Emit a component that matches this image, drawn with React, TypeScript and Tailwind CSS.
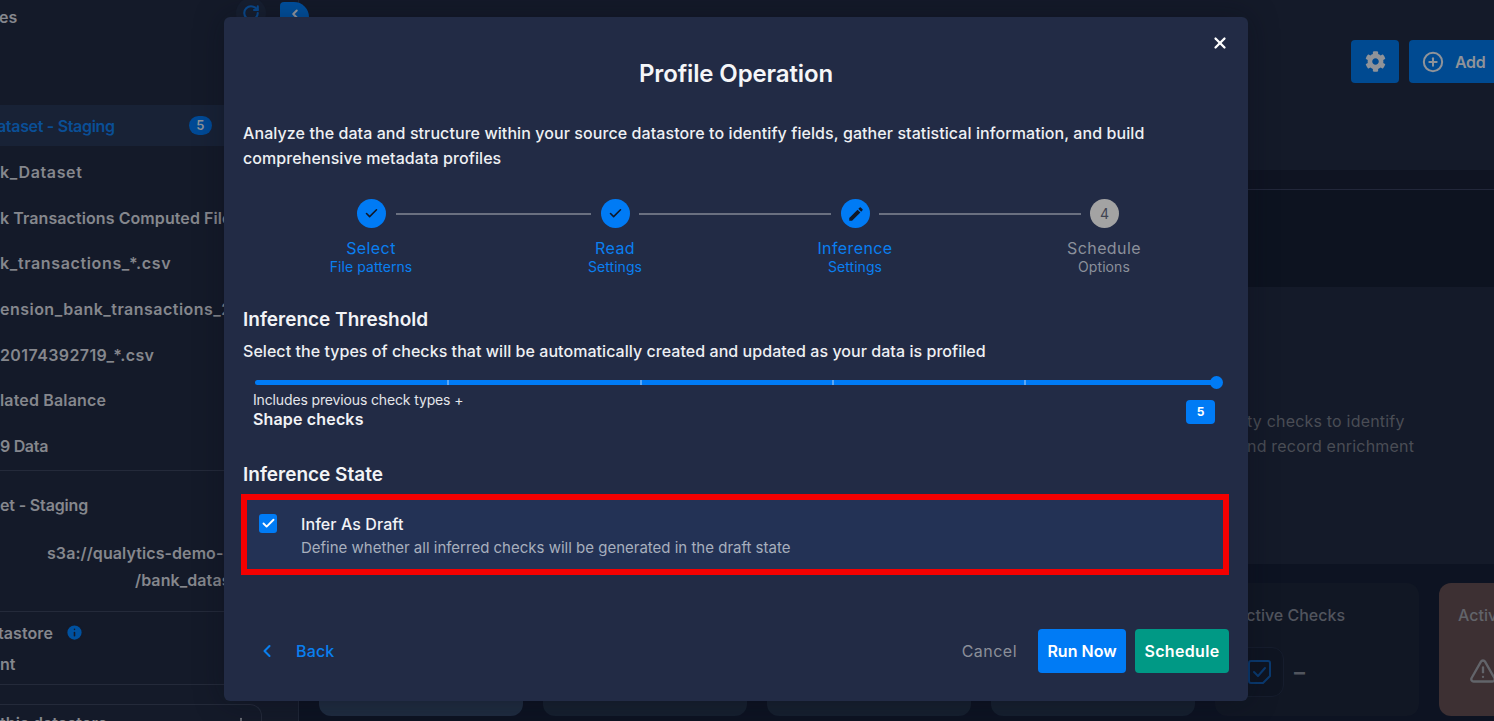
import { Check, ChevronLeft, CirclePlus, Info, Plus, RotateCw, TriangleAlert, X } from "lucide-react";
import { FaCog } from "react-icons/fa";
import { MdEdit } from "react-icons/md";

const fileRows = [
  { label: "k_Dataset", spacing: "tracking-[0.04em]" },
  { label: "k Transactions Computed File", spacing: "tracking-[0.005em]" },
  { label: "k_transactions_*.csv", spacing: "tracking-[0.04em]" },
  { label: "ension_bank_transactions_2024", spacing: "tracking-[0.03em]" },
  { label: "20174392719_*.csv", spacing: "tracking-[0.025em]" },
  { label: "lated Balance", spacing: "tracking-[0.01em]" },
  { label: "9 Data", spacing: "tracking-[-0.02em]" },
];

function Sidebar() {
  return (
    <aside className="w-[299px] shrink-0 h-full flex flex-col border-r border-[#1f2636] text-[16px] font-semibold text-[#85878d] tracking-[0.005em] whitespace-nowrap overflow-hidden">
      <div className="h-[105px] shrink-0 pt-[5px] leading-[24px] ml-[-1px]">es</div>
      <div className="h-[41px] shrink-0 bg-[#182236] flex items-center">
        <span className="ml-[-3px] w-[192px] shrink-0 text-[#0a4f96] tracking-[-0.02em]">ataset - Staging</span>
        <span className="w-[23px] h-[19px] shrink-0 rounded-full bg-[#004a96] text-[#8f9399] text-[13px] flex items-center justify-center">5</span>
      </div>
      <div className="flex flex-col shrink-0 pt-[3px]">
        {fileRows.map((row) => (
          <div key={row.label} className={`h-[45.7px] shrink-0 flex items-center ${row.spacing}`}>{row.label}</div>
        ))}
      </div>
      <div className="border-t border-[#242a3a] shrink-0 mt-[1px] pt-[22px] leading-[24px] tracking-[-0.01em]">et - Staging</div>
      <div className="pl-[47px] pt-[23px] leading-[27px] h-[95px] shrink-0 border-b border-[#242a3a]">
        <div>s3a://qualytics-demo-data</div>
        <div className="pl-[88px]">/bank_dataset</div>
      </div>
      <div className="pt-[9px] leading-[24px] shrink-0 flex items-center gap-[12px] ml-[-2px]">
        <span>tastore</span>
        <Info size={19} className="text-[#141a29] fill-[#00519f]" />
      </div>
      <div className="pt-[7px] leading-[24px] h-[40px] shrink-0 border-b border-[#242a3a]">nt</div>
      <div className="mt-[19px] w-[262px] h-[40px] shrink-0 border-t border-r border-[#242a3a] rounded-tr-xl flex justify-between pr-[12px] pt-[6px] leading-[24px]">
        <span>this datastore</span>
        <Plus size={16} className="mt-[4px]" />
      </div>
    </aside>
  );
}

function MainPanel() {
  const cardStyles = ["bg-[#1f2c40]", "bg-[#16202f]", "bg-[#16202f]", "bg-[#16202f]"];
  return (
    <main className="flex-1 min-w-0 h-full flex flex-col overflow-hidden whitespace-nowrap">
      <div className="h-[170px] shrink-0 pt-[40px] pl-[1052px] flex gap-[10px] items-start">
        <button className="w-[48px] h-[43px] shrink-0 rounded-[4px] bg-[#004a91] text-[#8f9399] flex items-center justify-center">
          <FaCog size={21} />
        </button>
        <button className="w-[120px] h-[43px] shrink-0 rounded-[4px] bg-[#004a91] text-[#8f9399] flex items-center pl-[13px] gap-[11px] text-[16px] font-semibold tracking-[-0.02em]">
          <CirclePlus size={22} strokeWidth={2.2} />
          Add
        </button>
      </div>
      <div className="h-[20px] shrink-0 bg-[#0f1422] border-b border-[#22273a]" />
      <div className="h-[97px] shrink-0 bg-[#0d1320]" />
      <div className="h-[277px] shrink-0 pt-[122px] pl-[948px] text-[16px] leading-[25px] text-[#4a4d55] tracking-[0.0125em]">
        <div>ty checks to identify</div>
        <div>nd record enrichment</div>
      </div>
      <div className="flex-1 bg-[#0d1322] pt-[19px] pl-[20px] flex gap-[20px]">
        {cardStyles.map((tone, i) => (
          <div key={i} className={`w-[204px] h-[133px] shrink-0 rounded-xl ${tone}`} />
        ))}
        <div className="w-[204px] h-[133px] shrink-0 rounded-xl bg-[#111724] pl-[19px] pt-[20px]">
          <div className="text-[16px] leading-[24px] font-medium text-[#51555e] pl-[1px]">Active Checks</div>
          <div className="mt-[20px] flex items-center gap-[10px]">
            <div className="w-[50px] h-[50px] rounded-xl border border-[#161d2d] bg-[#0f1522] flex items-center justify-center text-[#0a3a70]">
              <svg width="26" height="26" viewBox="0 0 26 26" fill="none" stroke="currentColor" strokeWidth="2" strokeLinejoin="round" strokeLinecap="round">
                <path d="M5 2h17a2 2 0 0 1 2 2v13l-7 7H5a2 2 0 0 1-2-2V4a2 2 0 0 1 2-2z" />
                <path d="M8 13l4 4 7-8" />
              </svg>
            </div>
            <span className="text-[22px] font-bold text-[#51555e]">–</span>
          </div>
        </div>
        <div className="w-[204px] h-[133px] shrink-0 rounded-xl bg-[#3d3033] pl-[19px] pt-[20px]">
          <div className="text-[16px] leading-[24px] font-medium text-[#62646a]">Active</div>
          <TriangleAlert size={28} className="mt-[30px] ml-[11px] text-[#62646a]" />
        </div>
      </div>
    </main>
  );
}

function StepBadge({ tone, children }: { tone: string; children: React.ReactNode }) {
  return (
    <div className={`w-[29px] h-[29px] shrink-0 rounded-full flex items-center justify-center ${tone}`}>{children}</div>
  );
}

function StepLabel({ title, sub, done, className }: { title: string; sub: string; done: boolean; className: string }) {
  return (
    <div className={`w-[120px] shrink-0 text-center ${done ? "text-[#0a7ff0]" : "text-[#8b909b]"} ${className}`}>
      <div className="text-[16px] leading-[20px] tracking-[0.025em]">{title}</div>
      <div className="text-[14px] leading-[18px] tracking-[0.005em]">{sub}</div>
    </div>
  );
}

function Stepper() {
  return (
    <div className="mt-[28px]">
      <div className="flex items-center pl-[114px]">
        <StepBadge tone="bg-[#007bf5] text-[#101828]"><Check size={15} strokeWidth={2.5} /></StepBadge>
        <div className="w-[195px] h-[2px] mx-[10px] bg-[#6a7080]" />
        <StepBadge tone="bg-[#007bf5] text-[#101828]"><Check size={15} strokeWidth={2.5} /></StepBadge>
        <div className="w-[192px] h-[2px] ml-[9px] mr-[10px] bg-[#6a7080]" />
        <StepBadge tone="bg-[#007bf5] text-[#101828]"><MdEdit size={18} /></StepBadge>
        <div className="w-[202px] h-[2px] mx-[9px] bg-[#6a7080]" />
        <StepBadge tone="bg-[#a3a3a3] text-[#3f4452] text-[14px]">4</StepBadge>
      </div>
      <div className="flex pl-[68px] pt-[10px]">
        <StepLabel title="Select" sub="File patterns" done className="" />
        <StepLabel title="Read" sub="Settings" done className="ml-[124px]" />
        <StepLabel title="Inference" sub="Settings" done className="ml-[120px]" />
        <StepLabel title="Schedule" sub="Options" done={false} className="ml-[129px]" />
      </div>
    </div>
  );
}

function ThresholdSlider() {
  const segments = [194, 193, 192, 192, 191];
  return (
    <div className="relative mt-[17px] ml-[12px] w-[962px] h-[5px] shrink-0 rounded-full bg-[#007bf5] flex">
      {segments.map((w, i) => (
        <div key={i} style={{ width: w }} className={i < 4 ? "h-full border-r-2 border-[#5aa7f5]" : "h-full"} />
      ))}
      <div className="absolute right-[-6px] top-[-4px] w-[13px] h-[13px] rounded-full bg-[#007bf5]" />
    </div>
  );
}

function ProfileModal() {
  return (
    <div className="absolute left-[224px] top-[17px] w-[1024px] h-[684px] rounded-md bg-[#222b45] shadow-[0_0_30px_rgba(8,12,24,0.35)] px-[19px] text-white flex flex-col">
      <button className="absolute right-[19px] top-[17px] text-white">
        <X size={18} strokeWidth={3} />
      </button>
      <h2 className="mt-[40px] text-center text-[24px] leading-[34px] font-semibold tracking-[-0.005em] text-[#f5f6f8]">Profile Operation</h2>
      <p className="mt-[30px] text-[16px] leading-[25px] tracking-[0.005em] text-[#eef0f3] font-medium whitespace-nowrap">
        Analyze the data and structure within your source datastore to identify fields, gather statistical information, and build
        <br />
        comprehensive metadata profiles
      </p>
      <Stepper />
      <div className="mt-[31px] text-[19px] leading-[26px] font-semibold text-[#f2f3f6]">Inference Threshold</div>
      <div className="mt-[6px] text-[16px] leading-[24px] font-medium tracking-[0.003em] text-[#eef0f3] whitespace-nowrap">
        Select the types of checks that will be automatically created and updated as your data is profiled
      </div>
      <ThresholdSlider />
      <div className="flex justify-between items-start pl-[10px] pr-[14px] pt-[5px]">
        <div>
          <div className="text-[14px] leading-[20px] tracking-[-0.01em] text-[#e4e6ea]">Includes previous check types +</div>
          <div className="text-[16px] leading-[19px] font-semibold tracking-[0.01em] text-[#f2f3f6]">Shape checks</div>
        </div>
        <div className="mt-[10px] w-[29px] h-[24px] rounded-[4px] bg-[#007bf5] flex items-center justify-center text-[12px] font-bold">5</div>
      </div>
      <div className="mt-[33px] text-[19px] leading-[26px] font-semibold text-[#f2f3f6]">Inference State</div>
      <div className="mt-[6px] ml-[-2px] w-[988px] h-[81px] shrink-0 border-[6px] border-[#f40000] bg-[#233255] flex items-start pl-[12px] pt-[14px]">
        <div className="w-[18px] h-[19px] rounded-[3px] bg-[#007bf5] flex items-center justify-center">
          <Check size={15} strokeWidth={3} className="text-white" />
        </div>
        <div className="ml-[24px] mt-[-2px]">
          <div className="text-[16px] leading-[24px] font-medium tracking-[0.005em] text-[#f2f3f6]">Infer As Draft</div>
          <div className="text-[15px] leading-[24px] text-[#a7afbd]">Define whether all inferred checks will be generated in the draft state</div>
        </div>
      </div>
      <div className="mt-[54px] flex items-center">
        <ChevronLeft size={20} strokeWidth={2.5} className="ml-[14px] text-[#0a7ff0]" />
        <span className="ml-[19px] text-[16px] font-medium tracking-[0.01em] text-[#0a7ff0]">Back</span>
        <span className="ml-auto mr-[21px] text-[16px] tracking-[0.03em] text-[#8b8f99]">Cancel</span>
        <button className="w-[88px] h-[44px] rounded-[4px] bg-[#007bf5] text-[16px] font-semibold text-white">Run Now</button>
        <button className="ml-[9px] w-[94px] h-[44px] rounded-[4px] bg-[#009985] text-[16px] font-semibold tracking-[0.02em] text-white">Schedule</button>
      </div>
    </div>
  );
}

export default function App() {
  return (
    <div className="relative w-[1494px] h-[721px] overflow-hidden bg-[#141a29] flex font-['Inter','Noto_Sans',sans-serif]">
      <Sidebar />
      <MainPanel />
      <div className="absolute left-[236px] top-[-2px] w-[30px] h-[30px] rounded-full bg-[#171f30] flex items-center justify-center text-[#0a4a8f]">
        <RotateCw size={18} strokeWidth={2.8} />
      </div>
      <div className="absolute left-[280px] top-[2px] w-[29px] h-[29px] rounded-tl-[4px] rounded-tr-[15px] bg-[#00519f] flex items-start justify-center pt-[5px] text-[#9a9da3]">
        <ChevronLeft size={14} strokeWidth={3.5} />
      </div>
      <ProfileModal />
    </div>
  );
}
